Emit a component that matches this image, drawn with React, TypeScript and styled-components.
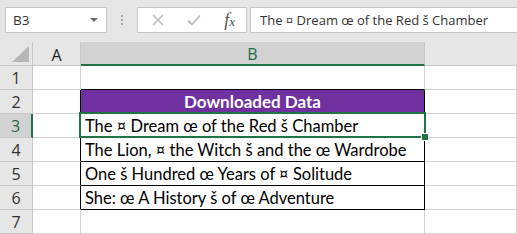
import React from 'react';
import styled, { createGlobalStyle } from 'styled-components';

const GlobalStyle = createGlobalStyle`
  html, body {
    margin: 0;
    padding: 0;
    background: #ffffff;
    overflow: hidden;
  }
`;

const rows = [
  { n: 1, text: '', kind: 'empty' },
  { n: 2, text: 'Downloaded Data', kind: 'head' },
  { n: 3, text: 'The ¤ Dream œ of the Red š Chamber', kind: 'data' },
  { n: 4, text: 'The Lion, ¤ the Witch š and the œ Wardrobe', kind: 'data' },
  { n: 5, text: 'One š Hundred œ Years of ¤ Solitude', kind: 'data' },
  { n: 6, text: 'She: œ A History š of œ Adventure', kind: 'data' },
  { n: 7, text: '', kind: 'empty' },
];

const App: React.FC = () => {
  return (
    <React.Fragment>
      <GlobalStyle />
      <Sheet>
        <Toolbar>
          <NameBox>
            <span>B3</span>
            <Caret />
          </NameBox>
          <Grip>
            <i />
            <i />
            <i />
          </Grip>
          <FxButtons>
            <svg width="12" height="12" viewBox="0 0 12 12">
              <path d="M1 1 L11 11 M11 1 L1 11" stroke="#bdbdbd" strokeWidth="1.6" fill="none" />
            </svg>
            <svg width="14" height="12" viewBox="0 0 14 12">
              <path d="M1 6.5 L5 10.5 L13 1.5" stroke="#bdbdbd" strokeWidth="1.8" fill="none" />
            </svg>
            <FxLabel>
              f<sub>x</sub>
            </FxLabel>
          </FxButtons>
          <FormulaInput>The ¤ Dream œ of the Red š Chamber</FormulaInput>
        </Toolbar>

        <Grid>
          <Corner>
            <svg width="17" height="16" viewBox="0 0 17 16">
              <path d="M17 0 L17 16 L0 16 Z" fill="#b6b6b6" />
            </svg>
          </Corner>
          <ColHead>A</ColHead>
          <ColHead $active>B</ColHead>
          <ColHead $last />

          {rows.map((r) => {
            const boxed = r.kind !== 'empty';
            const active = r.n === 3;
            return (
              <React.Fragment key={r.n}>
                <RowHead $active={active}>{r.n}</RowHead>
                <Cell $right={boxed ? '#000' : undefined} />
                {r.kind === 'head' ? (
                  <HeadCell>{r.text}</HeadCell>
                ) : (
                  <Cell
                    $right={boxed ? '#000' : undefined}
                    $bottom={boxed || r.n === 1 ? '#000' : undefined}
                    $selected={active}
                  >
                    {r.text}
                    {active && (
                      <Selection>
                        <FillHandle />
                      </Selection>
                    )}
                  </Cell>
                )}
                <Cell />
              </React.Fragment>
            );
          })}
        </Grid>
      </Sheet>
    </React.Fragment>
  );
};

const Sheet = styled.div`
  width: 517px;
  height: 234px;
  overflow: hidden;
  background: #ffffff;
`;

const Toolbar = styled.div`
  height: 42px;
  box-sizing: border-box;
  background: #e6e6e6;
  display: flex;
  align-items: flex-start;
  padding: 7px 0 0 5px;
  font-family: 'Open Sans', 'Noto Sans', sans-serif;
`;

const NameBox = styled.div`
  width: 102px;
  height: 26px;
  box-sizing: border-box;
  background: #fff;
  border: 1px solid #c6c6c6;
  display: flex;
  align-items: center;
  justify-content: space-between;
  padding: 0 8px 0 7px;
  font-size: 13.5px;
  color: #333;
`;

const Caret = styled.span`
  width: 0;
  height: 0;
  border-left: 4px solid transparent;
  border-right: 4px solid transparent;
  border-top: 4px solid #6f6f6f;
`;

const Grip = styled.div`
  width: 30px;
  height: 26px;
  display: flex;
  flex-direction: column;
  align-items: center;
  justify-content: center;
  gap: 2px;

  i {
    display: block;
    width: 2px;
    height: 2px;
    background: #a8a8a8;
  }
`;

const FxButtons = styled.div`
  width: 110px;
  height: 26px;
  box-sizing: border-box;
  background: #fff;
  border: 1px solid #c6c6c6;
  display: flex;
  align-items: center;
  justify-content: space-between;
  padding: 0 11px 0 14px;
`;

const FxLabel = styled.span`
  font-family: 'Liberation Serif', 'DejaVu Serif', serif;
  font-style: italic;
  font-size: 18px;
  color: #555;
  line-height: 1;

  sub {
    font-size: 13px;
    vertical-align: baseline;
    position: relative;
    top: 0;
  }
`;

const FormulaInput = styled.div`
  flex: 1;
  margin-left: 3px;
  height: 26px;
  box-sizing: border-box;
  background: #fff;
  border: 1px solid #c6c6c6;
  border-right: none;
  display: flex;
  align-items: center;
  padding-left: 9px;
  font-size: 13px;
  color: #333;
  white-space: nowrap;
`;

const Grid = styled.div`
  display: grid;
  grid-template-columns: 33px 48px 344px 1fr;
  grid-template-rows: 24px repeat(7, 24px);
  font-family: Lato, 'Liberation Sans', sans-serif;
`;

const Corner = styled.div`
  background: #e6e6e6;
  border-right: 1px solid #c8c8c8;
  border-bottom: 1px solid #c8c8c8;
  display: flex;
  align-items: flex-end;
  justify-content: flex-end;
  padding: 0 3px 3px 0;
`;

const ColHead = styled.div<{ $active?: boolean; $last?: boolean }>`
  background: ${(p) => (p.$active ? '#d2d2d2' : '#e6e6e6')};
  border-right: 1px solid ${(p) => (p.$last ? 'transparent' : '#c8c8c8')};
  border-bottom: ${(p) => (p.$active ? '2px solid #217346' : '1px solid #c8c8c8')};
  display: flex;
  align-items: center;
  justify-content: center;
  font-family: 'Open Sans', 'Noto Sans', sans-serif;
  font-size: 16px;
  color: ${(p) => (p.$active ? '#1e6b41' : '#222')};
  padding-top: 2px;
`;

const RowHead = styled.div<{ $active?: boolean }>`
  background: ${(p) => (p.$active ? '#d2d2d2' : '#e6e6e6')};
  border-right: ${(p) => (p.$active ? '2px solid #217346' : '1px solid #c8c8c8')};
  border-bottom: 1px solid #c8c8c8;
  display: flex;
  align-items: center;
  justify-content: center;
  font-family: 'Open Sans', 'Noto Sans', sans-serif;
  font-size: 16px;
  color: ${(p) => (p.$active ? '#1e6b41' : '#333')};
  padding-top: 1px;
`;

const Cell = styled.div<{ $right?: string; $bottom?: string; $selected?: boolean }>`
  position: ${(p) => (p.$selected ? 'relative' : 'static')};
  border-right: 1px solid ${(p) => p.$right || '#d4d4d4'};
  border-bottom: 1px solid ${(p) => p.$bottom || '#d4d4d4'};
  display: flex;
  align-items: flex-end;
  padding: 0 0 1px 4px;
  font-size: 16.5px;
  color: #000;
  white-space: nowrap;
  overflow: visible;
`;

const HeadCell = styled.div`
  background: #7030a0;
  border-right: 1px solid #000;
  border-bottom: 1px solid #000;
  display: flex;
  align-items: flex-end;
  justify-content: center;
  padding-bottom: 1px;
  font-size: 17px;
  font-weight: 700;
  color: #fff;
`;

const Selection = styled.div`
  position: absolute;
  left: -2px;
  top: -2px;
  right: -2px;
  bottom: -1px;
  border: 2px solid #217346;
  pointer-events: none;
`;

const FillHandle = styled.div`
  position: absolute;
  right: -5px;
  bottom: -5px;
  width: 6px;
  height: 6px;
  background: #217346;
  border: 1px solid #fff;
`;

export default App;
